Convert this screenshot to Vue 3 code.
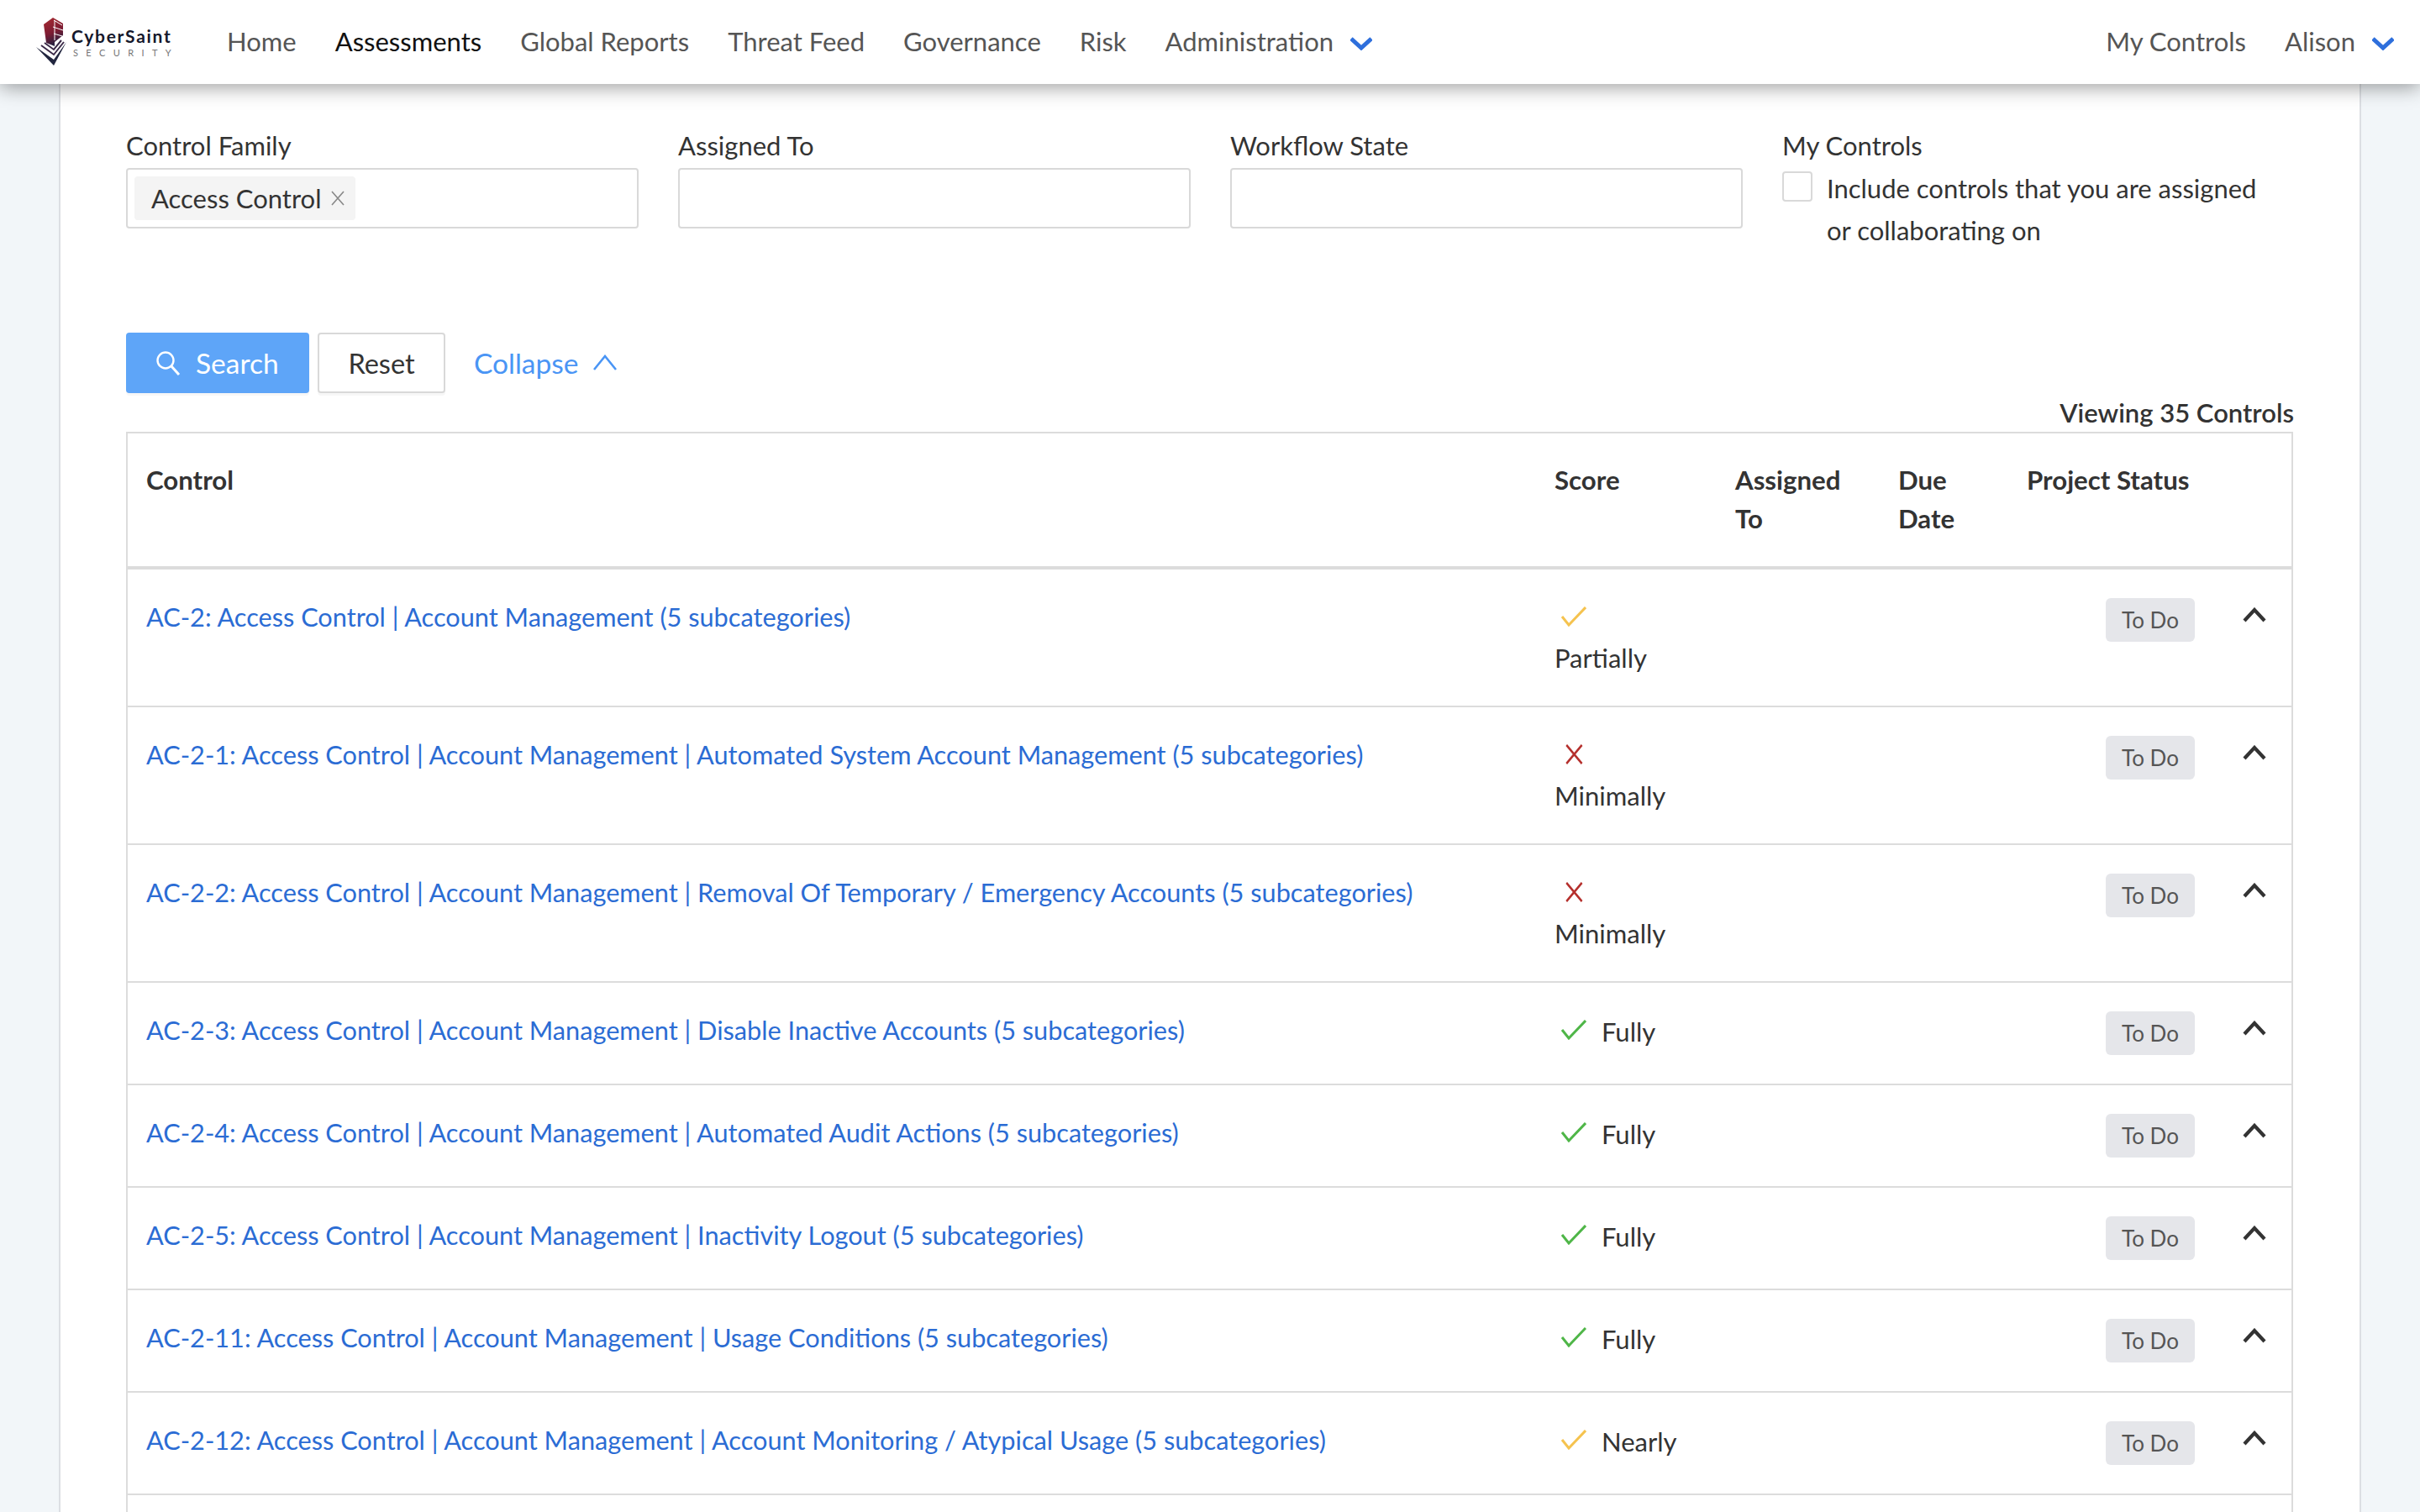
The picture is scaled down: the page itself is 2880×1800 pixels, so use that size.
<script setup>
const navLeft = [
  { label: 'Home' },
  { label: 'Assessments', active: true },
  { label: 'Global Reports' },
  { label: 'Threat Feed' },
  { label: 'Governance' },
  { label: 'Risk' },
]

const controles = [
  { nome: 'AC-2: Access Control | Account Management (5 subcategories)', score: 'Partially', tom: 'amarelo', empilhado: true },
  { nome: 'AC-2-1: Access Control | Account Management | Automated System Account Management (5 subcategories)', score: 'Minimally', tom: 'vermelho', empilhado: true },
  { nome: 'AC-2-2: Access Control | Account Management | Removal Of Temporary / Emergency Accounts (5 subcategories)', score: 'Minimally', tom: 'vermelho', empilhado: true },
  { nome: 'AC-2-3: Access Control | Account Management | Disable Inactive Accounts (5 subcategories)', score: 'Fully', tom: 'verde' },
  { nome: 'AC-2-4: Access Control | Account Management | Automated Audit Actions (5 subcategories)', score: 'Fully', tom: 'verde' },
  { nome: 'AC-2-5: Access Control | Account Management | Inactivity Logout (5 subcategories)', score: 'Fully', tom: 'verde' },
  { nome: 'AC-2-11: Access Control | Account Management | Usage Conditions (5 subcategories)', score: 'Fully', tom: 'verde' },
  { nome: 'AC-2-12: Access Control | Account Management | Account Monitoring / Atypical Usage (5 subcategories)', score: 'Nearly', tom: 'amarelo' },
]
</script>

<template>
  <div class="pagina">
    <header class="topo">
      <div class="logo">
        <svg class="logo-marca" width="38" height="58" viewBox="0 0 38 58">
          <defs>
            <linearGradient id="elmo" x1="0" y1="0" x2="0.3" y2="1">
              <stop offset="0" stop-color="#a92a30" />
              <stop offset="0.6" stop-color="#7c1c33" />
              <stop offset="1" stop-color="#2a2140" />
            </linearGradient>
          </defs>
          <path d="M20 0 L32 7 L32 21 L22 29 L22 34 L12 30 L9 8 Z" fill="url(#elmo)" />
          <path d="M21 3 L31 9 M20 11 L32 15 M21 19 L31 22 M22 3 L22 27" stroke="#fff" stroke-width="1" fill="none" />
          <path d="M0 35 L21 50 L36 29 L21 57 Z" fill="#22263f" />
          <path d="M6 33 L21 44 L33 29 M10 30 L21 38 L30 27" stroke="#3b2a48" stroke-width="2" fill="none" />
        </svg>
        <div class="logo-texto">
          <span class="logo-nome">CyberSaint</span>
          <span class="logo-sub">SECURITY</span>
        </div>
      </div>

      <nav class="menu">
        <a v-for="item in navLeft" :key="item.label" :class="{ ativo: item.active }">{{ item.label }}</a>
        <a class="com-seta">
          Administration
          <svg width="26" height="16" viewBox="0 0 26 16"><path d="M1 2 L13 13 L25 2" fill="none" stroke="#2e6fdc" stroke-width="5" /></svg>
        </a>
      </nav>

      <nav class="menu menu-direita">
        <a>My Controls</a>
        <a class="com-seta">
          Alison
          <svg width="26" height="16" viewBox="0 0 26 16"><path d="M1 2 L13 13 L25 2" fill="none" stroke="#2e6fdc" stroke-width="5" /></svg>
        </a>
      </nav>
    </header>

    <main class="conteudo">
      <section class="filtros">
        <div class="campo">
          <label>Control Family</label>
          <div class="entrada">
            <span class="chip">
              Access Control
              <svg width="16" height="18" viewBox="0 0 16 18"><path d="M1 1 L15 17 M15 1 L1 17" fill="none" stroke="#888" stroke-width="1.6" /></svg>
            </span>
          </div>
        </div>
        <div class="campo">
          <label>Assigned To</label>
          <div class="entrada"></div>
        </div>
        <div class="campo">
          <label>Workflow State</label>
          <div class="entrada"></div>
        </div>
        <div class="campo">
          <label>My Controls</label>
          <div class="opcao">
            <span class="caixa"></span>
            <span class="opcao-texto">Include controls that you are assigned or collaborating on</span>
          </div>
        </div>
      </section>

      <div class="acoes">
        <button class="btn btn-busca">
          <svg width="30" height="30" viewBox="0 0 30 30">
            <circle cx="12" cy="12" r="9.5" fill="none" stroke="#fff" stroke-width="2.4" />
            <path d="M19 19 L28 29" stroke="#fff" stroke-width="3" />
          </svg>
          Search
        </button>
        <button class="btn btn-limpar">Reset</button>
        <a class="recolher">
          Collapse
          <svg width="28" height="20" viewBox="0 0 28 20"><path d="M1 18 L14 2 L27 18" fill="none" stroke="#4a95f5" stroke-width="2.6" /></svg>
        </a>
      </div>

      <p class="total">Viewing 35 Controls</p>

      <table class="tabela">
        <colgroup>
          <col class="col-controle" />
          <col class="col-score" />
          <col class="col-assign" />
          <col class="col-data" />
          <col />
        </colgroup>
        <thead>
          <tr>
            <th>Control</th>
            <th>Score</th>
            <th>Assigned To</th>
            <th>Due Date</th>
            <th>Project Status</th>
          </tr>
        </thead>
        <tbody>
          <tr v-for="c in controles" :key="c.nome">
            <td class="celula-nome"><a>{{ c.nome }}</a></td>
            <td>
              <div class="score" :class="{ empilhado: c.empilhado }">
                <span class="score-icone">
                  <svg v-if="c.tom === 'vermelho'" width="30" height="24" viewBox="0 0 30 24">
                    <path d="M4 1 L27 23 M27 1 L4 23" fill="none" stroke="#b5302d" stroke-width="3" transform="translate(3 0) scale(.8 1)" />
                  </svg>
                  <svg v-else width="30" height="24" viewBox="0 0 30 24">
                    <path d="M1 12 L9 22 L29 1" fill="none" :stroke="c.tom === 'verde' ? '#4fb648' : '#f5c34f'" stroke-width="3" />
                  </svg>
                </span>
                <span class="score-texto">{{ c.score }}</span>
              </div>
            </td>
            <td></td>
            <td></td>
            <td>
              <div class="estado">
                <span class="etiqueta">To Do</span>
                <svg class="seta" width="28" height="18" viewBox="0 0 28 18"><path d="M2 16 L14 3 L26 16" fill="none" stroke="#333" stroke-width="4.2" /></svg>
              </div>
            </td>
          </tr>
          <!-- a tabela continua abaixo da dobra -->
          <tr class="fila-vazia"><td colspan="5"></td></tr>
        </tbody>
      </table>
    </main>
  </div>
</template>

<style scoped>
.pagina {
  height: 1800px;
  overflow: hidden;
  background: #f2f6f9;
  font-family: Lato, "Liberation Sans", sans-serif;
  font-size: 31px;
  color: #333;
}

.topo {
  position: relative;
  z-index: 2;
  display: flex;
  align-items: center;
  height: 100px;
  background: #fff;
  box-shadow: 0 4px 22px rgba(0, 0, 0, 0.38);
}

.logo {
  display: flex;
  align-items: flex-start;
  margin-left: 43px;
  width: 227px;
}

.logo-texto {
  display: flex;
  flex-direction: column;
  margin-left: 4px;
  margin-top: 9px;
}

.logo-nome {
  font-size: 21px;
  font-weight: 700;
  line-height: 26px;
  letter-spacing: 1.7px;
  color: #15182b;
}

.logo-sub {
  font-size: 11px;
  line-height: 14px;
  letter-spacing: 9.4px;
  color: #777;
  margin-left: 2px;
}

.menu {
  display: flex;
  align-items: center;
  gap: 46px;
  margin-top: -3px;
  color: #555;
  line-height: 46px;
}

.menu a.ativo {
  color: #111;
}

.menu-direita {
  margin-left: auto;
  margin-right: 31px;
}

.com-seta {
  display: flex;
  align-items: center;
  gap: 20px;
}

.com-seta svg {
  margin-top: 6px;
}

.conteudo {
  margin: 0 70px;
  padding: 50px 78px 0;
  background: #fff;
  border-left: 2px solid #dcdfe3;
  border-right: 2px solid #dcdfe3;
  height: 1700px;
}

.filtros {
  display: grid;
  grid-template-columns: repeat(4, 610px);
  gap: 47px;
  margin-bottom: 97px;
}

.campo label {
  display: block;
  line-height: 46px;
  margin-bottom: 4px;
}

.entrada {
  box-sizing: border-box;
  height: 72px;
  padding: 8px;
  border: 2px solid #d9d9d9;
  border-radius: 4px;
  background: #fff;
}

.chip {
  display: inline-flex;
  align-items: center;
  gap: 12px;
  box-sizing: border-box;
  height: 52px;
  padding: 0 13px 0 20px;
  background: #f4f4f4;
  border-radius: 4px;
}

.opcao {
  display: flex;
  align-items: flex-start;
  gap: 17px;
  margin-top: 8px;
}

.caixa {
  flex: none;
  box-sizing: border-box;
  width: 36px;
  height: 36px;
  border: 2px solid #d9d9d9;
  border-radius: 4px;
  background: #fff;
}

.opcao-texto {
  line-height: 50px;
  margin-top: -5px;
  max-width: 540px;
}

.acoes {
  display: flex;
  align-items: center;
  gap: 10px;
  height: 72px;
}

.btn {
  box-sizing: border-box;
  display: flex;
  align-items: center;
  height: 72px;
  border-radius: 4px;
  font: inherit;
  box-shadow: 0 3px 0 rgba(0, 0, 0, 0.03);
}

.btn-busca {
  width: 218px;
  padding: 0 0 0 35px;
  gap: 18px;
  font-size: 33.5px;
  background: #5ea5f8;
  border: none;
  color: #fff;
}

.btn-limpar {
  width: 152px;
  justify-content: center;
  font-size: 32.5px;
  background: #fff;
  border: 2px solid #d9d9d9;
  color: #333;
}

.recolher {
  display: flex;
  align-items: center;
  gap: 18px;
  margin-left: 24px;
  font-size: 33.5px;
  color: #4a95f5;
}

.total {
  margin: 0;
  line-height: 46px;
  text-align: right;
  font-weight: 600;
}

.tabela {
  width: 2579px;
  table-layout: fixed;
  border-collapse: separate;
  border-spacing: 0;
  border: 2px solid #dcdcdc;
}

.col-controle { width: 1675px; }
.col-score { width: 215px; }
.col-assign { width: 194px; }
.col-data { width: 153px; }

th {
  padding: 32px 23px 34px;
  line-height: 46px;
  font-size: 31.2px;
  font-weight: 700;
  text-align: left;
  vertical-align: top;
  border-bottom: 4px solid #dcdcdc;
}

th:first-child,
.celula-nome {
  padding-left: 22px;
}

td {
  padding: 31px 23px;
  vertical-align: top;
  border-bottom: 2px solid #dcdcdc;
}

.celula-nome {
  padding-top: 32px;
  line-height: 50px;
  font-size: 30.7px;
}

.celula-nome a {
  color: #2b6cd4;
}

.fila-vazia td {
  height: 100px;
}

.score {
  display: flex;
  gap: 18px;
}

.score-icone {
  display: flex;
  align-items: center;
  height: 50px;
  padding-left: 8px;
}

.score-texto {
  line-height: 50px;
  margin-top: 2px;
}

.score.empilhado {
  flex-direction: column;
  gap: 0;
  padding-bottom: 1px;
}

.score.empilhado .score-texto {
  margin-top: -1px;
}

.estado {
  display: flex;
  justify-content: flex-end;
  align-items: flex-start;
  gap: 57px;
  margin-top: 3px;
  margin-bottom: 3px;
  margin-right: 7px;
}

.etiqueta {
  box-sizing: border-box;
  width: 106px;
  height: 52px;
  line-height: 52px;
  text-align: center;
  font-size: 26px;
  color: #555;
  background: #e5e6ea;
  border-radius: 6px;
}

.seta {
  margin-top: 11px;
}
</style>

<style>
html,
body {
  margin: 0;
  background: #f2f6f9;
}
</style>
